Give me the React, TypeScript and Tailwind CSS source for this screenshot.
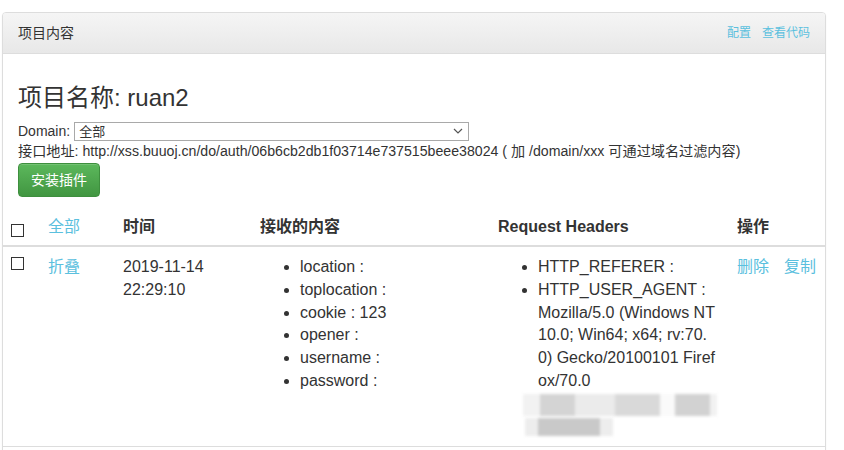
import React from 'react'

const received = [
  ['location', ''],
  ['toplocation', ''],
  ['cookie', '123'],
  ['opener', ''],
  ['username', ''],
  ['password', ''],
]

function Box() {
  return <span className="inline-block w-[13px] h-[13px] border border-[#333] bg-white align-middle" />
}

export default function App() {
  return (
    <div className="h-[450px] overflow-hidden bg-white pl-[2px] pt-[12px] text-[#333] font-['Liberation_Sans','Noto_Sans_CJK_SC',sans-serif]">
      <div className="w-[824px] border border-[#ddd] rounded-[4px] bg-white shadow-[0_1px_2px_rgba(0,0,0,0.05)] overflow-hidden">
        {/* Panel heading */}
        <div className="flex items-center justify-between h-[41px] px-[15px] border-b border-[#ddd] bg-gradient-to-b from-[#f5f5f5] to-[#e8e8e8]">
          <span className="text-[14px]">项目内容</span>
          <div className="flex gap-[11px] text-[12px] text-[#5bc0de]">
            <a href="#">配置</a>
            <a href="#">查看代码</a>
          </div>
        </div>

        {/* Panel body */}
        <div className="px-[15px] pt-[31px] pb-[11px] text-[14px] leading-[20px]">
          <h3 className="text-[24px] leading-[26px] mb-[10px]">项目名称: ruan2</h3>
          <div className="flex items-center h-[20px]">
            <span>Domain:</span>
            <div className="ml-[4px] flex items-center justify-between w-[395px] h-[19px] border border-[#a9a9a9] pl-[4px] pr-[4px]">
              <span className="text-[13px] leading-none">全部</span>
              <svg width="10" height="6" viewBox="0 0 10 6" className="mr-[1px]">
                <path d="M1 1l4 4 4-4" fill="none" stroke="#555" strokeWidth="1.2" />
              </svg>
            </div>
          </div>
          <p className="text-[14.15px] whitespace-nowrap">
            接口地址: http://xss.buuoj.cn/do/auth/06b6cb2db1f03714e737515beee38024 ( 加 /domain/xxx 可通过域名过滤内容)
          </p>
          <button className="mt-[2px] px-[12px] h-[34px] rounded-[4px] border border-[#3e8f3e] bg-gradient-to-b from-[#5cb85c] to-[#419641] text-white text-[14px] shadow-[inset_0_1px_0_rgba(255,255,255,0.15)]">
            安装插件
          </button>
        </div>

        {/* Table */}
        <table className="w-full table-fixed border-collapse text-[16px] leading-[22.86px]">
          <colgroup>
            <col className="w-[37px]" />
            <col className="w-[75px]" />
            <col className="w-[137px]" />
            <col className="w-[238px]" />
            <col className="w-[239px]" />
            <col />
          </colgroup>
          <thead>
            <tr className="border-b-2 border-[#ddd] text-left">
              <th className="px-[8px] pt-[8px] pb-[7px] align-bottom leading-none"><Box /></th>
              <th className="px-[8px] pt-[8px] pb-[6px] font-normal text-[#5bc0de]">全部</th>
              <th className="px-[8px] pt-[8px] pb-[6px]">时间</th>
              <th className="px-[8px] pt-[8px] pb-[6px]">接收的内容</th>
              <th className="px-[8px] pt-[8px] pb-[6px]">Request Headers</th>
              <th className="px-[8px] pt-[8px] pb-[6px]">操作</th>
            </tr>
          </thead>
          <tbody>
            <tr className="border-b border-[#ddd] align-top">
              <td className="px-[8px] pt-[8px] leading-none"><Box /></td>
              <td className="px-[8px] pt-[9px] text-[#5bc0de]">折叠</td>
              <td className="px-[8px] pt-[9px]">2019-11-14 22:29:10</td>
              <td className="px-[8px] pt-[9px]">
                <ul className="list-disc pl-[40px] mb-[10px]">
                  {received.map(([k, v]) => (
                    <li key={k}>
                      {k} : {v}
                    </li>
                  ))}
                </ul>
              </td>
              <td className="px-[8px] pt-[9px] pb-[10px]">
                <ul className="list-disc pl-[40px] pr-[5px] break-all">
                  <li>HTTP_REFERER :</li>
                  <li>
                    HTTP_USER_AGENT : Mozilla/5.0 (Windows NT 10.0; Win64; x64; rv:70.0) Gecko/20100101 Firefox/70.0
                    <div className="ml-[-15px] mt-[1px] flex flex-col gap-[2px]">
                      <div className="flex h-[22px] w-[194px] bg-[#f2f2f2] blur-[1.5px]">
                        <div className="ml-[17px] w-[35px] bg-[#d4d4d4]" />
                        <div className="w-[40px] bg-[#ebebeb]" />
                        <div className="w-[45px] bg-[#d9d9d9]" />
                        <div className="w-[15px] bg-[#fafafa]" />
                        <div className="w-[35px] bg-[#d2d2d2]" />
                      </div>
                      <div className="flex h-[18px] w-[88px] ml-[2px] bg-[#ededed] blur-[1.5px]">
                        <div className="ml-[13px] w-[62px] bg-[#c9c9c9]" />
                      </div>
                    </div>
                  </li>
                </ul>
              </td>
              <td className="px-[8px] pt-[9px]">
                <div className="flex gap-[15px] text-[#5bc0de]">
                  <a href="#">删除</a>
                  <a href="#">复制</a>
                </div>
              </td>
            </tr>
          </tbody>
        </table>
        <div className="h-[40px]" />
      </div>
    </div>
  )
}
